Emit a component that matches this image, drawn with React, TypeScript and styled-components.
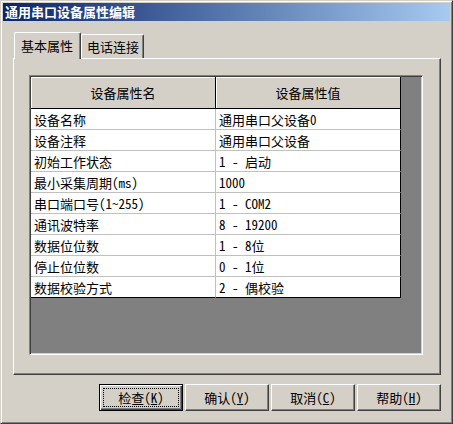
import React from 'react';
import styled, { createGlobalStyle } from 'styled-components';

const FACE = '#d4d0c8';
const SHADOW = '#808080';
const DARK = '#404040';
const FONT = `"Noto Sans Mono CJK SC", "Noto Sans CJK SC", "Liberation Mono", monospace`;

const GlobalStyle = createGlobalStyle`
  html, body {
    margin: 0;
    padding: 0;
    background: ${FACE};
  }
  body {
    font-family: ${FONT};
    font-size: 13px;
    color: #000;
  }
`;

const Window = styled.div`
  box-sizing: border-box;
  width: 453px;
  height: 424px;
  display: flex;
  flex-direction: column;
  background: ${FACE};
  border: 1px solid;
  border-color: ${FACE} ${DARK} ${DARK} ${FACE};
  box-shadow: inset 1px 1px #fff, inset -1px -1px ${SHADOW};
  padding: 2px;
`;

const TitleBar = styled.div`
  height: 18px;
  flex: none;
  display: flex;
  align-items: center;
  padding-left: 2px;
  margin-bottom: 1px;
  background: linear-gradient(to right, #0a246a, #a6caf0);
  color: #fff;
  font-weight: bold;
  font-size: 13px;
  line-height: 18px;
  white-space: nowrap;
`;

const Client = styled.div`
  flex: 1;
  display: flex;
  flex-direction: column;
  padding: 10px 9px 10px 10px;
`;

const TabStrip = styled.div`
  height: 26px;
  display: flex;
  align-items: flex-end;
  padding-left: 1px;
  position: relative;
  z-index: 1;
`;

const Tab = styled.div<{ $active?: boolean }>`
  box-sizing: border-box;
  height: ${(p) => (p.$active ? '27px' : '24px')};
  margin-bottom: ${(p) => (p.$active ? '-1px' : '0')};
  padding: ${(p) => (p.$active ? '0 7px 1px 6px' : '0 4px 0 5px')};
  display: flex;
  align-items: center;
  justify-content: center;
  background: ${FACE};
  border-left: 1px solid #fff;
  border-top: 1px solid #fff;
  border-right: 1px solid ${DARK};
  border-top-left-radius: 2px;
  border-top-right-radius: 2px;
  box-shadow: inset -1px 0 ${SHADOW};
  white-space: nowrap;
`;

const Panel = styled.div`
  box-sizing: border-box;
  width: 428px;
  height: 317px;
  border-left: 1px solid #fff;
  border-top: 1px solid #fff;
  border-right: 1px solid ${DARK};
  border-bottom: 1px solid ${DARK};
  box-shadow: inset -1px -1px ${SHADOW};
  padding: 16px 0 0 15px;
`;

const GridBox = styled.div`
  box-sizing: border-box;
  width: 394px;
  height: 280px;
  background: ${SHADOW};
  border: 1px solid;
  border-color: ${SHADOW} #fff #fff ${SHADOW};
  box-shadow: inset 1px 1px ${DARK}, inset -1px -1px ${FACE};
  padding: 1px;
`;

const Table = styled.div`
  display: grid;
  grid-template-columns: 185px 185px;
  background: #fff;
  width: max-content;
`;

const HeadCell = styled.div`
  box-sizing: border-box;
  height: 32px;
  display: flex;
  align-items: center;
  justify-content: center;
  background: ${FACE};
  border-right: 1px solid #000;
  border-bottom: 1px solid #000;
  box-shadow: inset 1px 1px #fff;
  white-space: nowrap;
`;

const Cell = styled.div<{ $lastCol?: boolean; $lastRow?: boolean }>`
  box-sizing: border-box;
  height: 21px;
  display: flex;
  align-items: center;
  padding-left: 3px;
  background: #fff;
  border-right: 1px solid ${(p) => (p.$lastCol ? '#000' : '#c0c0c0')};
  border-bottom: 1px solid ${(p) => (p.$lastRow ? '#000' : '#c0c0c0')};
  white-space: pre;
`;

const ButtonRow = styled.div`
  display: flex;
  justify-content: flex-end;
  gap: 2px;
  margin-top: 9px;
`;

const Button = styled.button<{ $default?: boolean }>`
  box-sizing: border-box;
  width: 84px;
  height: 27px;
  padding: 0;
  margin: 0;
  font-family: ${FONT};
  font-size: 13px;
  color: #000;
  background: ${FACE};
  border: 1px solid;
  border-color: ${(p) => (p.$default ? '#000' : `#fff ${DARK} ${DARK} #fff`)};
  box-shadow: ${(p) =>
    p.$default
      ? `inset 1px 1px #fff, inset -1px -1px ${DARK}, inset -2px -2px ${SHADOW}`
      : `inset -1px -1px ${SHADOW}`};
  display: flex;
  align-items: center;
  justify-content: center;
  outline: none;
  white-space: pre;
`;

const Focus = styled.span`
  box-sizing: border-box;
  width: 76px;
  height: 19px;
  display: flex;
  align-items: center;
  justify-content: center;
  border: 1px dotted #000;
  white-space: pre;
`;

const Key = styled.span`
  text-decoration: underline;
`;

const rows: [string, string][] = [
  ['设备名称', '通用串口父设备0'],
  ['设备注释', '通用串口父设备'],
  ['初始工作状态', '1 - 启动'],
  ['最小采集周期(ms)', '1000'],
  ['串口端口号(1~255)', '1 - COM2'],
  ['通讯波特率', '8 - 19200'],
  ['数据位位数', '1 - 8位'],
  ['停止位位数', '0 - 1位'],
  ['数据校验方式', '2 - 偶校验'],
];

const buttons = [
  { label: '检查', key: 'K' },
  { label: '确认', key: 'Y' },
  { label: '取消', key: 'C' },
  { label: '帮助', key: 'H' },
];

export default function App() {
  return (
    <>
      <GlobalStyle />
      <Window>
        <TitleBar>通用串口设备属性编辑</TitleBar>
        <Client>
          <TabStrip>
            <Tab $active>基本属性</Tab>
            <Tab>电话连接</Tab>
          </TabStrip>
          <Panel>
            <GridBox>
              <Table>
                <HeadCell>设备属性名</HeadCell>
                <HeadCell>设备属性值</HeadCell>
                {rows.map(([name, value], i) => (
                  <React.Fragment key={name}>
                    <Cell $lastRow={i === rows.length - 1}>{name}</Cell>
                    <Cell $lastCol $lastRow={i === rows.length - 1}>
                      {value}
                    </Cell>
                  </React.Fragment>
                ))}
              </Table>
            </GridBox>
          </Panel>
          <ButtonRow>
            {buttons.map((b, i) => {
              const content = (
                <>
                  {b.label}(<Key>{b.key}</Key>)
                </>
              );
              return (
                <Button key={b.key} $default={i === 0}>
                  {i === 0 ? <Focus>{content}</Focus> : content}
                </Button>
              );
            })}
          </ButtonRow>
        </Client>
      </Window>
    </>
  );
}
